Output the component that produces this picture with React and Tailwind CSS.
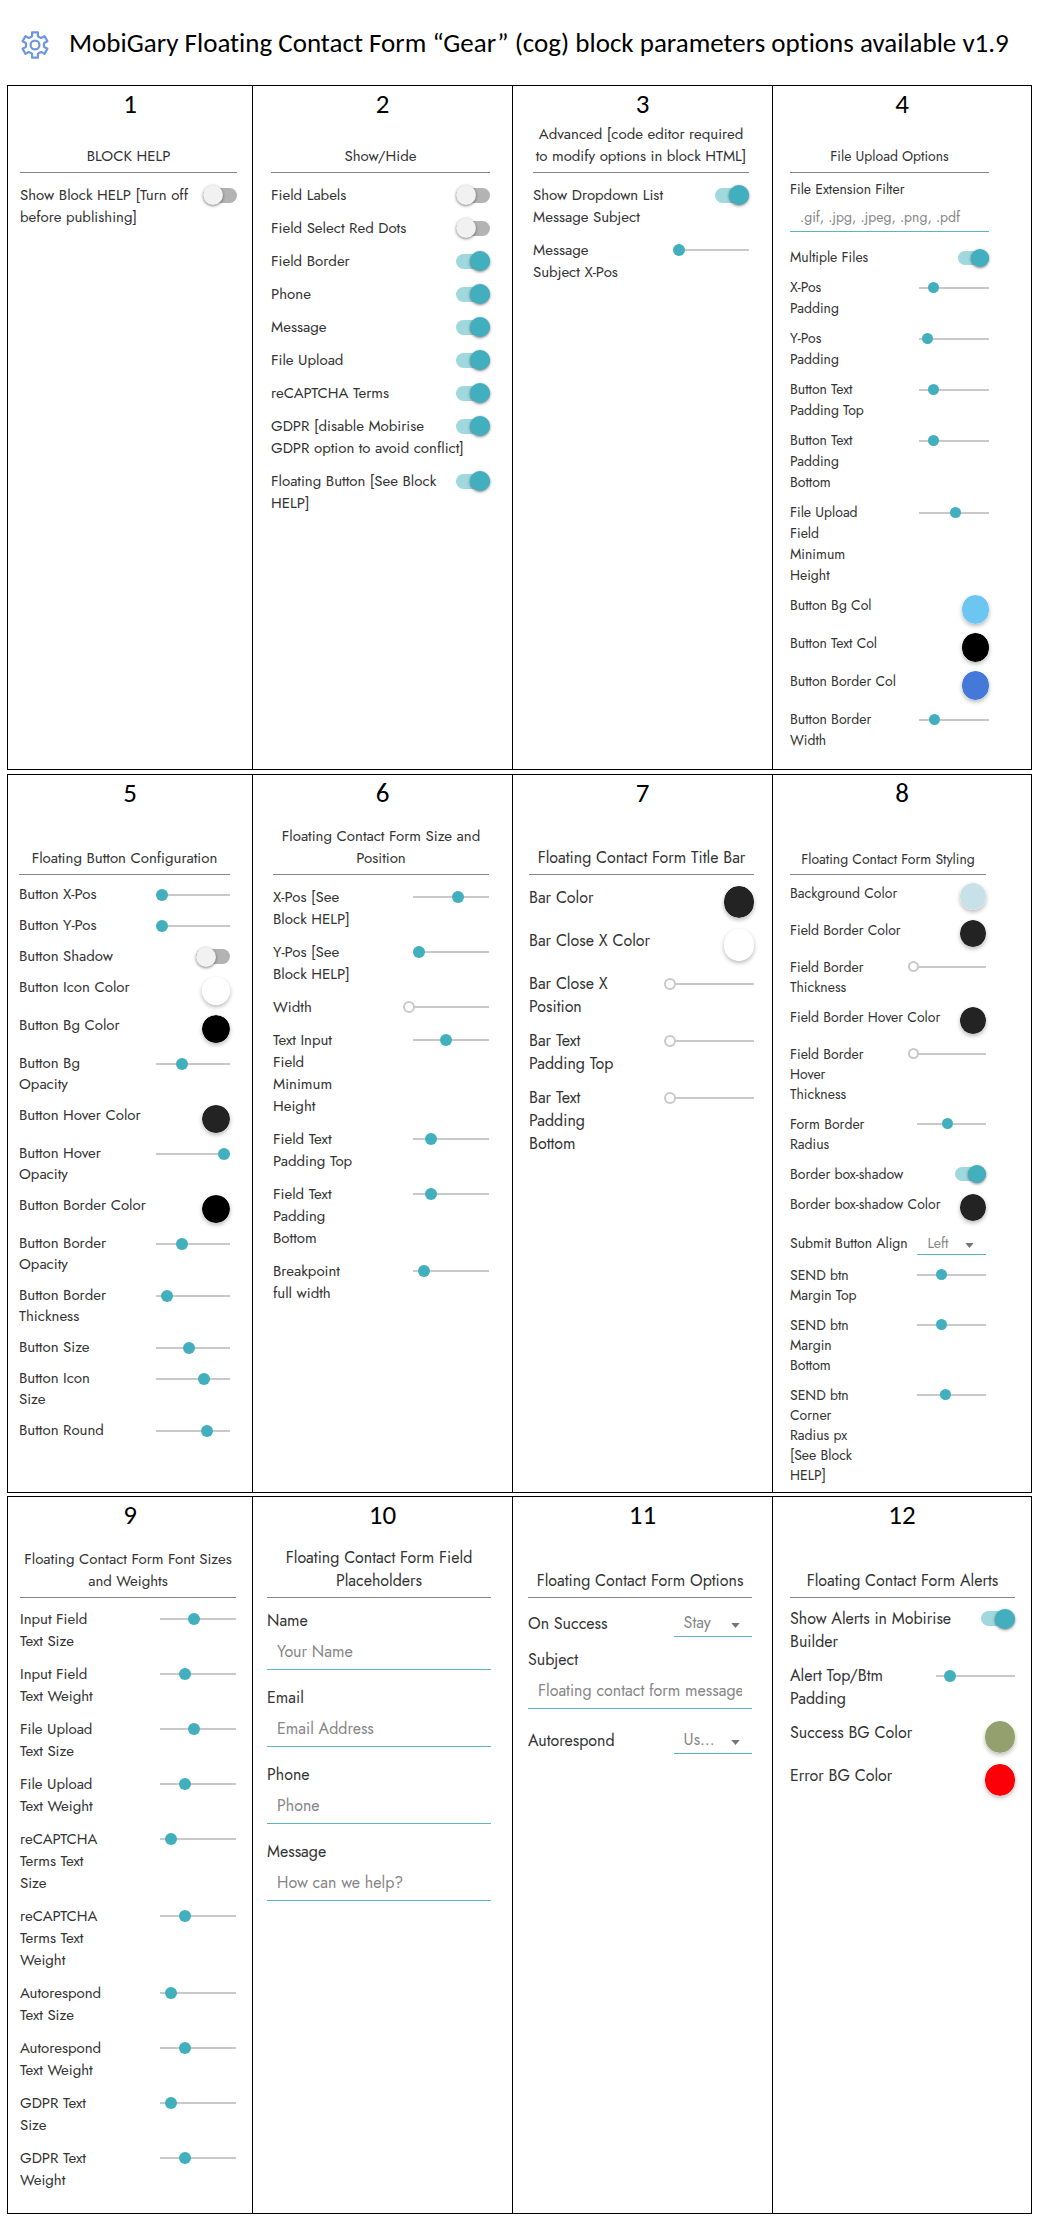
import React from 'react';

const slug = (panel, text) => `p${panel}-${text.toLowerCase().replace(/[^a-z0-9]+/g, '-')}`;

function gearPath() {
  const points = [];
  const at = (deg, r) => {
    const a = (deg * Math.PI) / 180;
    points.push(`${(14 + r * Math.cos(a)).toFixed(2)} ${(14 + r * Math.sin(a)).toFixed(2)}`);
  };
  for (let k = 0; k < 6; k += 1) {
    const mid = -90 + k * 60;
    at(mid - 18, 9.4);
    at(mid - 13, 13);
    at(mid + 13, 13);
    at(mid + 18, 9.4);
    at(mid + 30, 8.9);
  }
  return `M${points.join('L')}Z`;
}

function GearIcon() {
  return (
    <svg viewBox="0 0 28 28" className="mt-1 size-7 shrink-0" fill="none" stroke="#6f97e0" strokeWidth="2.2" strokeLinejoin="round" aria-hidden="true">
      <path d={gearPath()} />
      <circle cx="14" cy="14" r="4.4" />
    </svg>
  );
}

function Toggle({ id, on, small }) {
  const size = small
    ? 'h-[14px] w-[31px] before:size-[18px]'
    : 'h-[15px] w-[34px] before:size-5';
  return (
    <span className="flex h-[1lh] shrink-0 items-center">
      <input
        id={id}
        type="checkbox"
        defaultChecked={on}
        className={`${size} flex appearance-none items-center rounded-full bg-[#b3b3b3] before:shrink-0 before:rounded-full before:bg-[#f1f1f1] before:shadow-[0_1px_3px_rgba(0,0,0,0.5)] before:content-[''] checked:justify-end checked:bg-[#9fd8dd] checked:before:bg-[#41afbd]`}
      />
    </span>
  );
}

const sliderBase =
  "block h-[1lh] shrink-0 appearance-none bg-transparent [&::-webkit-slider-runnable-track]:h-[2px] [&::-webkit-slider-runnable-track]:bg-[#c9c9c9] [&::-webkit-slider-thumb]:appearance-none [&::-webkit-slider-thumb]:rounded-full [&::-webkit-slider-thumb]:-mt-[5px]";

function Slider({ id, value, empty, small }) {
  const size = small
    ? '[&::-webkit-slider-thumb]:size-[11px]'
    : '[&::-webkit-slider-thumb]:size-3';
  const look = empty
    ? 'w-2/5 [&::-webkit-slider-thumb]:border-2 [&::-webkit-slider-thumb]:border-[#c9c9c9] [&::-webkit-slider-thumb]:bg-white'
    : 'w-[35%] [&::-webkit-slider-thumb]:bg-[#41afbd]';
  return <input id={id} type="range" min="0" max="100" defaultValue={value} className={`${sliderBase} ${size} ${look}`} />;
}

function Swatch({ id, color, size }) {
  return (
    <input
      id={id}
      type="color"
      defaultValue={color}
      className={`${size} block shrink-0 appearance-none rounded-full bg-transparent shadow-[0_2px_4px_rgba(0,0,0,0.28)] [&::-webkit-color-swatch]:rounded-full [&::-webkit-color-swatch]:border-none [&::-webkit-color-swatch-wrapper]:p-0`}
    />
  );
}

function Select({ id, value, height }) {
  return (
    <span className="relative block w-[35%] shrink-0">
      <select
        id={id}
        defaultValue={value}
        className={`${height} block w-full appearance-none border-b border-[#5cb4bf] bg-transparent pr-6 pl-[10px] text-[#868686]`}
      >
        <option>{value}</option>
      </select>
      <svg viewBox="0 0 10 6" className="pointer-events-none absolute top-1/2 right-3 h-[5px] w-[9px]" fill="#757575" aria-hidden="true">
        <path d="M0 0h10L5 6z" />
      </svg>
    </span>
  );
}

function Row({ panel, item }) {
  const id = slug(panel.number, item.label);
  if (item.kind === 'text') {
    return (
      <div className={`${panel.fieldGap} flex flex-col`}>
        <label htmlFor={id}>{item.label}</label>
        <input
          id={id}
          type="text"
          placeholder={item.placeholder}
          className={`${panel.inputHeight} w-full border-b border-[#5cb4bf] bg-transparent px-[10px] pt-[2px] placeholder:text-[#868686]`}
        />
      </div>
    );
  }
  return (
    <div className={`flex justify-between ${item.kind === 'select' ? 'items-center' : 'items-start'}`}>
      <label htmlFor={id} className="w-0 grow whitespace-pre">{item.label}</label>
      {item.kind === 'toggle' && <Toggle id={id} on={item.on} small={panel.small} />}
      {item.kind === 'slider' && <Slider id={id} value={item.value} empty={item.empty} small={panel.small} />}
      {item.kind === 'color' && <Swatch id={id} color={item.color} size={panel.swatch} />}
      {item.kind === 'select' && <Select id={id} value={item.value} height={panel.selectHeight} />}
    </div>
  );
}

const toggle = (label, on = true) => ({ kind: 'toggle', label, on });
const slider = (label, value) => ({ kind: 'slider', label, value });
const empty = (label) => ({ kind: 'slider', label, value: 0, empty: true });
const color = (label, value) => ({ kind: 'color', label, color: value });
const text = (label, placeholder) => ({ kind: 'text', label, placeholder });
const select = (label, value) => ({ kind: 'select', label, value });

const MEDIUM = 'text-[15px] leading-[22px]';
const LARGE = 'text-base leading-[23px]';

const rows = [
  {
    heading: 'h-[51px]',
    spacing: 'mb-1',
    panels: [
      {
        number: 1, title: 'BLOCK HELP', font: MEDIUM, pad: 'pl-3 pr-[15px]', list: 'pt-[11px] gap-[11px]',
        items: [toggle('Show Block HELP [Turn off\nbefore publishing]', false)],
      },
      {
        number: 2, title: 'Show/Hide', font: MEDIUM, pad: 'pl-[18px] pr-[22px]', list: 'pt-[11px] gap-[11px]',
        items: [
          toggle('Field Labels', false), toggle('Field Select Red Dots', false), toggle('Field Border'), toggle('Phone'),
          toggle('Message'), toggle('File Upload'), toggle('reCAPTCHA Terms'),
          toggle('GDPR [disable Mobirise\nGDPR option to avoid conflict]'), toggle('Floating Button [See Block\nHELP]'),
        ],
      },
      {
        number: 3, title: 'Advanced [code editor required\nto modify options in block HTML]', font: MEDIUM, pad: 'pl-5 pr-[23px]', list: 'pt-[11px] gap-[11px]',
        items: [toggle('Show Dropdown List\nMessage Subject'), slider('Message\nSubject X-Pos', 0)],
      },
      {
        number: 4, title: 'File Upload Options', font: 'text-sm leading-[21px]', pad: 'pl-[17px] pr-[42px]', list: 'pt-[6px] pb-[18px] gap-[9px]',
        small: true, swatch: 'w-[27px] h-[29px]', inputHeight: 'h-8', fieldGap: 'mb-[6px]',
        items: [
          text('File Extension Filter', '.gif, .jpg, .jpeg, .png, .pdf'), toggle('Multiple Files'),
          slider('X-Pos\nPadding', 15), slider('Y-Pos\nPadding', 5), slider('Button Text\nPadding Top', 14),
          slider('Button Text\nPadding\nBottom', 14), slider('File Upload\nField\nMinimum\nHeight', 53),
          color('Button Bg Col', '#6dc5f1'), color('Button Text Col', '#000000'), color('Button Border Col', '#4479d9'),
          slider('Button Border\nWidth', 16),
        ],
      },
    ],
  },
  {
    heading: 'h-16',
    spacing: 'mb-[3px]',
    panels: [
      {
        number: 5, title: 'Floating Button Configuration', font: 'text-[15px] leading-[21px]', pad: 'pl-[11px] pr-[22px]', list: 'pt-[9px] gap-[10px]',
        swatch: 'size-7',
        items: [
          slider('Button X-Pos', 0), slider('Button Y-Pos', 0), toggle('Button Shadow', false),
          color('Button Icon Color', '#ffffff'), color('Button Bg Color', '#000000'), slider('Button Bg\nOpacity', 32),
          color('Button Hover Color', '#232323'), slider('Button Hover\nOpacity', 100), color('Button Border Color', '#000000'),
          slider('Button Border\nOpacity', 32), slider('Button Border\nThickness', 8), slider('Button Size', 43),
          slider('Button Icon\nSize', 67), slider('Button Round', 73),
        ],
      },
      {
        number: 6, title: 'Floating Contact Form Size and\nPosition', font: MEDIUM, pad: 'pl-5 pr-[23px]', list: 'pt-[11px] gap-[11px]',
        items: [
          slider('X-Pos [See\nBlock HELP]', 60), slider('Y-Pos [See\nBlock HELP]', 0), empty('Width'),
          slider('Text Input\nField\nMinimum\nHeight', 42), slider('Field Text\nPadding Top', 18),
          slider('Field Text\nPadding\nBottom', 18), slider('Breakpoint\nfull width', 7),
        ],
      },
      {
        number: 7, title: 'Floating Contact Form Title Bar', font: LARGE, pad: 'pl-4 pr-[18px]', list: 'pt-[11px] gap-[11px]', swatch: 'w-[30px] h-8',
        items: [
          color('Bar Color', '#232323'), color('Bar Close X Color', '#ffffff'), empty('Bar Close X\nPosition'),
          empty('Bar Text\nPadding Top'), empty('Bar Text\nPadding\nBottom'),
        ],
      },
      {
        number: 8, title: 'Floating Contact Form Styling', font: 'text-sm leading-5', pad: 'pl-[17px] pr-[45px]', list: 'pt-2 pb-[7px] gap-[10px]',
        small: true, swatch: 'w-[26px] h-[27px]', selectHeight: 'h-6',
        items: [
          color('Background Color', '#c8e0e7'), color('Field Border Color', '#232323'), empty('Field Border\nThickness'),
          color('Field Border Hover Color', '#232323'), empty('Field Border\nHover\nThickness'), slider('Form Border\nRadius', 43),
          toggle('Border box-shadow'), color('Border box-shadow Color', '#232323'), select('Submit Button Align', 'Left'),
          slider('SEND btn\nMargin Top', 32), slider('SEND btn\nMargin\nBottom', 32),
          slider('SEND btn\nCorner\nRadius px\n[See Block\nHELP]', 39),
        ],
      },
    ],
  },
  {
    heading: 'h-[65px]',
    spacing: 'mb-0',
    panels: [
      {
        number: 9, title: 'Floating Contact Form Font Sizes\nand Weights', font: MEDIUM, pad: 'pl-3 pr-4', list: 'pt-[10px] pb-[22px] gap-[11px]',
        items: [
          slider('Input Field\nText Size', 44), slider('Input Field\nText Weight', 29), slider('File Upload\nText Size', 44),
          slider('File Upload\nText Weight', 29), slider('reCAPTCHA\nTerms Text\nSize', 8), slider('reCAPTCHA\nTerms Text\nWeight', 29),
          slider('Autorespond\nText Size', 8), slider('Autorespond\nText Weight', 29), slider('GDPR Text\nSize', 8),
          slider('GDPR Text\nWeight', 29),
        ],
      },
      {
        number: 10, title: 'Floating Contact Form Field\nPlaceholders', font: LARGE, pad: 'pl-[14px] pr-[21px]', list: 'pt-[11px] gap-[11px]',
        inputHeight: 'h-[38px]', fieldGap: 'mb-[5px]',
        items: [text('Name', 'Your Name'), text('Email', 'Email Address'), text('Phone', 'Phone'), text('Message', 'How can we help?')],
      },
      {
        number: 11, title: 'Floating Contact Form Options', font: LARGE, pad: 'pl-[15px] pr-5', list: 'pt-[11px] gap-[11px]',
        inputHeight: 'h-[38px]', fieldGap: 'mb-[6px]', selectHeight: 'h-7',
        items: [select('On Success', 'Stay'), text('Subject', 'Floating contact form message'), select('Autorespond', 'Us...')],
      },
      {
        number: 12, title: 'Floating Contact Form Alerts', font: LARGE, pad: 'pl-[17px] pr-4', list: 'pt-[9px] gap-[11px]', swatch: 'w-[30px] h-8',
        items: [
          toggle('Show Alerts in Mobirise\nBuilder'), slider('Alert Top/Btm\nPadding', 11),
          color('Success BG Color', '#94a16e'), color('Error BG Color', '#fb0007'),
        ],
      },
    ],
  },
];

function Panel({ panel, heading }) {
  return (
    <section className="border-r border-black last:border-r-0">
      <p className="h-9 text-center font-[Carlito,Lato,sans-serif] text-[27px] leading-[35px] text-black">{panel.number}</p>
      <div className={`${panel.font} ${panel.pad}`}>
        <h2 className={`${heading} flex items-end justify-center border-b border-[#858585] pb-[5px] text-center whitespace-pre`}>{panel.title}</h2>
        <div className={`${panel.list} flex flex-col`}>
          {panel.items.map((item) => (
            <Row key={item.label} panel={panel} item={item} />
          ))}
        </div>
      </div>
    </section>
  );
}

export default function App() {
  return (
    <main className="bg-white pr-3 pb-[14px] pl-[7px] font-[Jost,Lato,sans-serif] text-[#333333]">
      <header className="flex h-[85px] items-center gap-5 pl-[14px]">
        <GearIcon />
        <h1 className="font-[Carlito,Lato,sans-serif] text-[27px] leading-9 whitespace-nowrap text-black [font-variant-ligatures:none]">
          MobiGary Floating Contact Form “Gear” (cog) block parameters options available v1.9
        </h1>
      </header>
      <div className="flex flex-col">
        {rows.map((row) => (
          <div key={row.heading} className={`${row.spacing} grid grid-cols-[245fr_260fr_260fr_258fr] border border-black`}>
            {row.panels.map((panel) => (
              <Panel key={panel.number} panel={panel} heading={row.heading} />
            ))}
          </div>
        ))}
      </div>
    </main>
  );
}
